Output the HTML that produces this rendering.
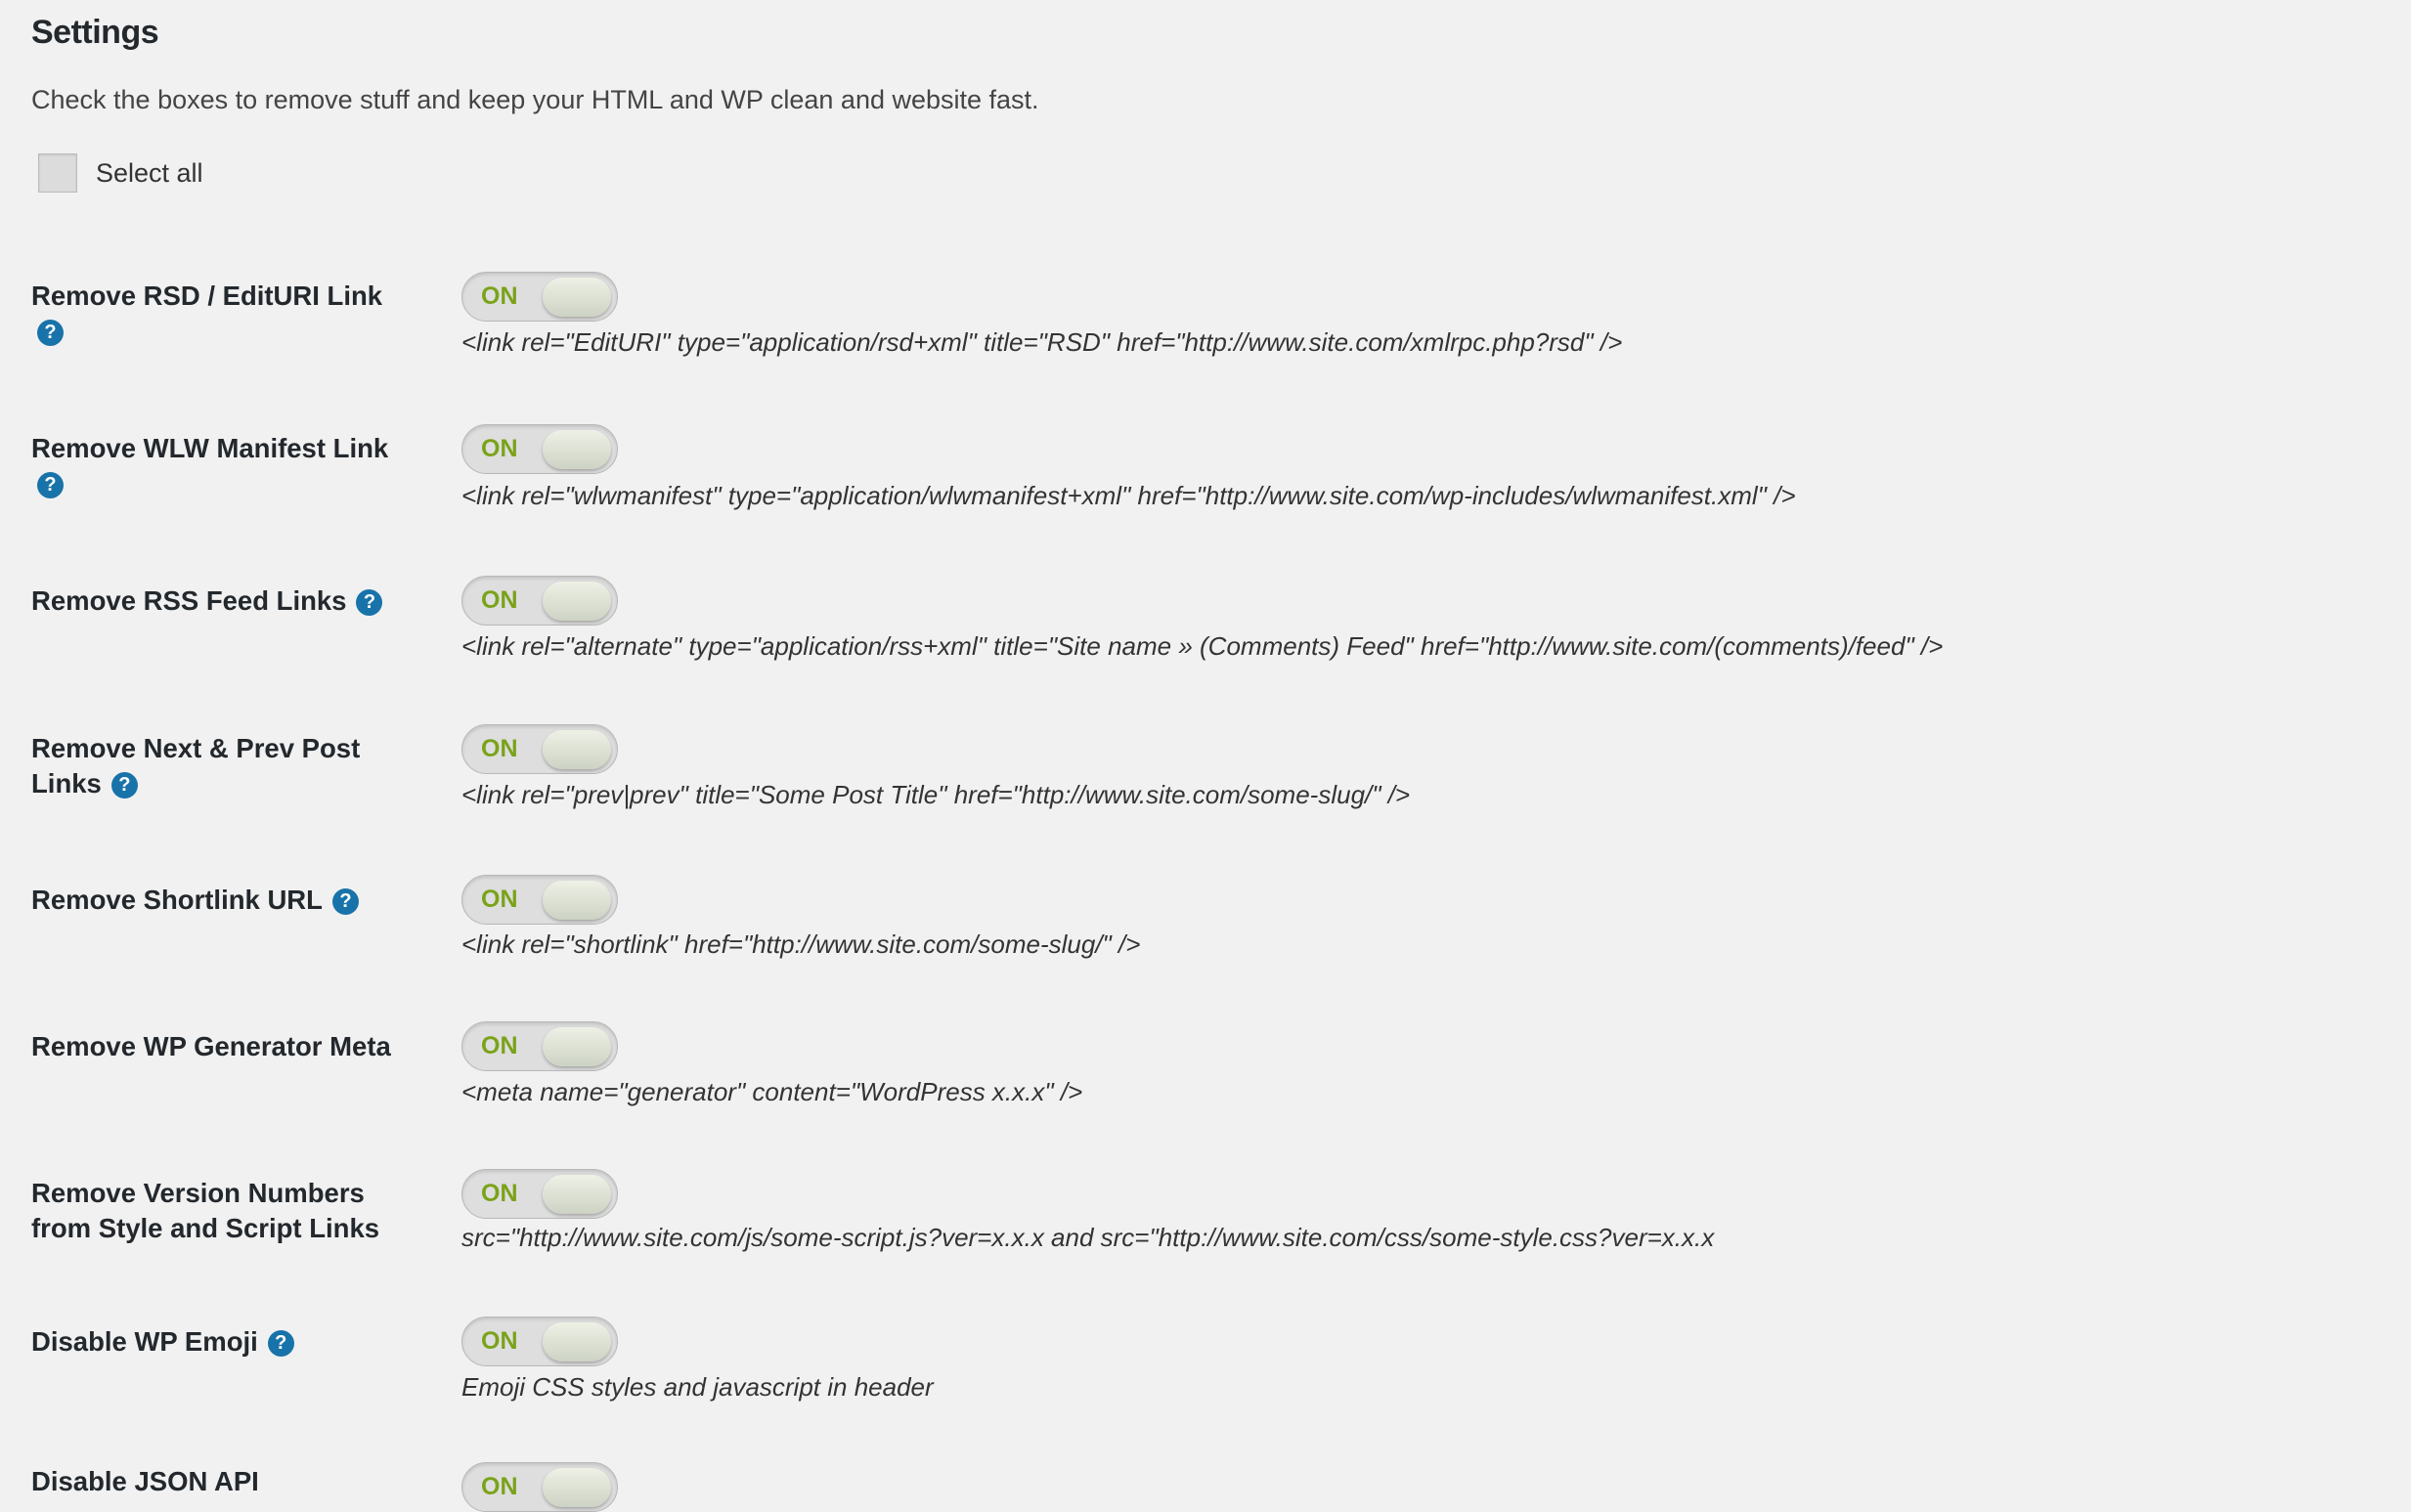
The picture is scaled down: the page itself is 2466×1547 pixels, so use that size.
<!DOCTYPE html>
<html><head><meta charset="utf-8"><style>
body{margin:0;width:2466px;height:1522px;background:#f1f1f1;overflow:hidden;font-family:"Liberation Sans",sans-serif;color:#23282d;position:relative}
.a{position:absolute;white-space:nowrap}
h1{position:absolute;left:32px;top:14px;margin:0;font-size:34px;font-weight:bold;color:#23282d;letter-spacing:-0.5px}
.desc{left:32px;top:87px;font-size:27px;color:#444}
.cb{left:39px;top:157px;width:40px;height:40px;background:#dcdcdc;border:1px solid #bbb;box-sizing:border-box;box-shadow:inset 0 1px 2px rgba(0,0,0,.1)}
.sel{left:98px;top:162px;font-size:27px;color:#333}
.lab{left:32px;font-size:27.5px;font-weight:bold;color:#23282d;line-height:36px}
.tg{left:472px;width:160px;height:51px;border-radius:26px;background:#dedede;border:1px solid #b8b8b8;box-sizing:border-box;box-shadow:inset 0 2px 3px rgba(0,0,0,.12)}
.tg b{position:absolute;left:19px;top:10px;font-size:25px;color:#7aa31a}
.tg i{position:absolute;right:6px;top:5px;width:70px;height:40px;border-radius:20px;background:linear-gradient(#eef1e6,#cdd3c4);box-shadow:0 2px 3px rgba(0,0,0,.25)}
.code{left:472px;font-size:26px;font-style:italic;color:#333}
.q{display:inline-block;width:27px;height:27px;border-radius:50%;background:#1873aa;color:#fff;font-size:20px;font-weight:bold;text-align:center;line-height:27px;vertical-align:middle;margin-left:10px}
</style></head><body>
<h1>Settings</h1>
<div class="a desc">Check the boxes to remove stuff and keep your HTML and WP clean and website fast.</div>
<div class="a cb"></div>
<div class="a sel">Select all</div>

<div class="a lab" style="top:285px">Remove RSD / EditURI Link<br><span class="q" style="margin-left:6px">?</span></div>
<div class="a tg" style="top:278px"><b>ON</b><i></i></div>
<div class="a code" style="top:335px">&lt;link rel="EditURI" type="application/rsd+xml" title="RSD" href="http://www.site.com/xmlrpc.php?rsd" /&gt;</div>

<div class="a lab" style="top:441px">Remove WLW Manifest Link<br><span class="q" style="margin-left:6px">?</span></div>
<div class="a tg" style="top:434px"><b>ON</b><i></i></div>
<div class="a code" style="top:492px">&lt;link rel="wlwmanifest" type="application/wlwmanifest+xml" href="http://www.site.com/wp-includes/wlwmanifest.xml" /&gt;</div>

<div class="a lab" style="top:597px">Remove RSS Feed Links<span class="q">?</span></div>
<div class="a tg" style="top:589px"><b>ON</b><i></i></div>
<div class="a code" style="top:646px">&lt;link rel="alternate" type="application/rss+xml" title="Site name » (Comments) Feed" href="http://www.site.com/(comments)/feed" /&gt;</div>

<div class="a lab" style="top:748px">Remove Next &amp; Prev Post<br>Links<span class="q">?</span></div>
<div class="a tg" style="top:741px"><b>ON</b><i></i></div>
<div class="a code" style="top:798px">&lt;link rel="prev|prev" title="Some Post Title" href="http://www.site.com/some-slug/" /&gt;</div>

<div class="a lab" style="top:903px">Remove Shortlink URL<span class="q">?</span></div>
<div class="a tg" style="top:895px"><b>ON</b><i></i></div>
<div class="a code" style="top:951px">&lt;link rel="shortlink" href="http://www.site.com/some-slug/" /&gt;</div>

<div class="a lab" style="top:1053px">Remove WP Generator Meta</div>
<div class="a tg" style="top:1045px"><b>ON</b><i></i></div>
<div class="a code" style="top:1102px">&lt;meta name="generator" content="WordPress x.x.x" /&gt;</div>

<div class="a lab" style="top:1203px">Remove Version Numbers<br>from Style and Script Links</div>
<div class="a tg" style="top:1196px"><b>ON</b><i></i></div>
<div class="a code" style="top:1251px">src="http://www.site.com/js/some-script.js?ver=x.x.x and src="http://www.site.com/css/some-style.css?ver=x.x.x</div>

<div class="a lab" style="top:1355px">Disable WP Emoji<span class="q">?</span></div>
<div class="a tg" style="top:1347px"><b>ON</b><i></i></div>
<div class="a code" style="top:1404px">Emoji CSS styles and javascript in header</div>

<div class="a lab" style="top:1498px">Disable JSON API</div>
<div class="a tg" style="top:1496px"><b>ON</b><i></i></div>
</body></html>
